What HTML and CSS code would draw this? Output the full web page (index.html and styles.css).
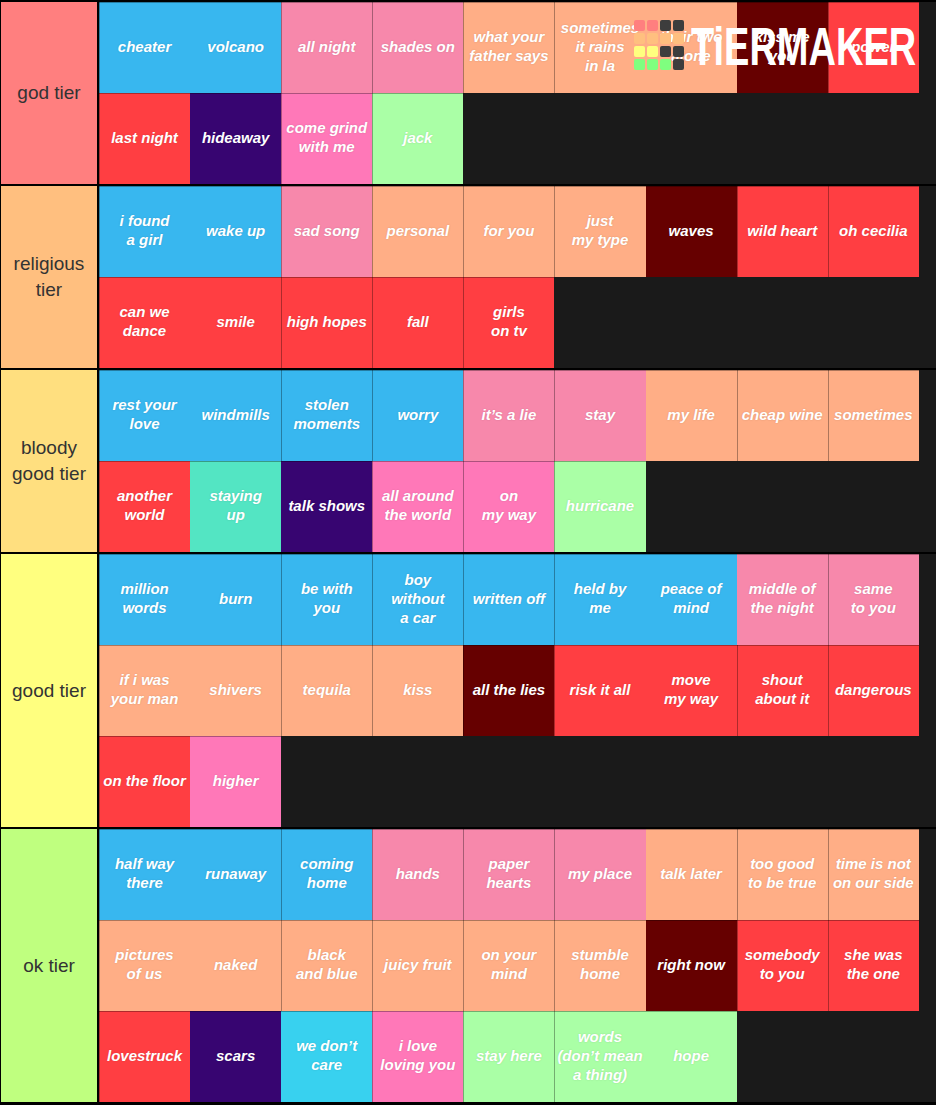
FILE: index.html
```html
<!DOCTYPE html>
<html>
<head>
<meta charset="utf-8">
<link rel="stylesheet" href="styles.css">
</head>
<body>
<div class="list">
  <div class="tier">
    <div class="label c1">god tier</div>
    <div class="items">
      <div class="tile bl">cheater</div>
      <div class="tile bl n">volcano</div>
      <div class="tile pk">all night</div>
      <div class="tile pk">shades on</div>
      <div class="tile pe">what your<br>father says</div>
      <div class="tile pe">sometimes<br>it rains<br>in la</div>
      <div class="tile pe n">their two<br>alone</div>
      <div class="tile dr n">kiss me<br>you</div>
      <div class="tile rd">power</div>
      <div class="tile rd">last night</div>
      <div class="tile pu n">hideaway</div>
      <div class="tile hp">come grind<br>with me</div>
      <div class="tile gr">jack</div>
    </div>
  </div>
  <div class="tier">
    <div class="label c2">religious tier</div>
    <div class="items">
      <div class="tile bl">i found<br>a girl</div>
      <div class="tile bl n">wake up</div>
      <div class="tile pk">sad song</div>
      <div class="tile pe">personal</div>
      <div class="tile pe">for you</div>
      <div class="tile pe">just<br>my type</div>
      <div class="tile dr n">waves</div>
      <div class="tile rd">wild heart</div>
      <div class="tile rd">oh cecilia</div>
      <div class="tile rd">can we<br>dance</div>
      <div class="tile rd n">smile</div>
      <div class="tile rd">high hopes</div>
      <div class="tile rd">fall</div>
      <div class="tile rd">girls<br>on tv</div>
    </div>
  </div>
  <div class="tier">
    <div class="label c3">bloody good tier</div>
    <div class="items">
      <div class="tile bl">rest your<br>love</div>
      <div class="tile bl n">windmills</div>
      <div class="tile bl">stolen<br>moments</div>
      <div class="tile bl">worry</div>
      <div class="tile pk">it’s a lie</div>
      <div class="tile pk">stay</div>
      <div class="tile pe n">my life</div>
      <div class="tile pe">cheap wine</div>
      <div class="tile pe">sometimes</div>
      <div class="tile rd">another<br>world</div>
      <div class="tile te n">staying<br>up</div>
      <div class="tile pu n">talk shows</div>
      <div class="tile hp">all around<br>the world</div>
      <div class="tile hp">on<br>my way</div>
      <div class="tile gr">hurricane</div>
    </div>
  </div>
  <div class="tier">
    <div class="label c4">good tier</div>
    <div class="items">
      <div class="tile bl">million<br>words</div>
      <div class="tile bl n">burn</div>
      <div class="tile bl">be with<br>you</div>
      <div class="tile bl">boy<br>without<br>a car</div>
      <div class="tile bl">written off</div>
      <div class="tile bl">held by<br>me</div>
      <div class="tile bl n">peace of<br>mind</div>
      <div class="tile pk n">middle of<br>the night</div>
      <div class="tile pk">same<br>to you</div>
      <div class="tile pe">if i was<br>your man</div>
      <div class="tile pe n">shivers</div>
      <div class="tile pe">tequila</div>
      <div class="tile pe">kiss</div>
      <div class="tile dr">all the lies</div>
      <div class="tile rd">risk it all</div>
      <div class="tile rd n">move<br>my way</div>
      <div class="tile rd">shout<br>about it</div>
      <div class="tile rd">dangerous</div>
      <div class="tile rd">on the floor</div>
      <div class="tile hp n">higher</div>
    </div>
  </div>
  <div class="tier">
    <div class="label c5">ok tier</div>
    <div class="items">
      <div class="tile bl">half way<br>there</div>
      <div class="tile bl n">runaway</div>
      <div class="tile bl">coming<br>home</div>
      <div class="tile pk">hands</div>
      <div class="tile pk">paper<br>hearts</div>
      <div class="tile pk">my place</div>
      <div class="tile pe n">talk later</div>
      <div class="tile pe">too good<br>to be true</div>
      <div class="tile pe">time is not<br>on our side</div>
      <div class="tile pe">pictures<br>of us</div>
      <div class="tile pe n">naked</div>
      <div class="tile pe">black<br>and blue</div>
      <div class="tile pe">juicy fruit</div>
      <div class="tile pe">on your<br>mind</div>
      <div class="tile pe">stumble<br>home</div>
      <div class="tile dr n">right now</div>
      <div class="tile rd">somebody<br>to you</div>
      <div class="tile rd">she was<br>the one</div>
      <div class="tile rd">lovestruck</div>
      <div class="tile pu n">scars</div>
      <div class="tile cy n">we don’t<br>care</div>
      <div class="tile hp">i love<br>loving you</div>
      <div class="tile gr">stay here</div>
      <div class="tile gr">words<br>(don’t mean<br>a thing)</div>
      <div class="tile gr n">hope</div>
    </div>
  </div>

  <div class="logo">
    <div class="squares">
      <span class="sq s1"></span><span class="sq s1"></span><span class="sq sx"></span><span class="sq sx"></span>
      <span class="sq s2"></span><span class="sq s2"></span><span class="sq s2"></span><span class="sq s2"></span>
      <span class="sq s3"></span><span class="sq s3"></span><span class="sq sx"></span><span class="sq sx"></span>
      <span class="sq s4"></span><span class="sq s4"></span><span class="sq s4"></span><span class="sq sx"></span>
    </div>
    <div class="logo-text">TiERMAKER</div>
  </div>
</div>
</body>
</html>
```

FILE: styles.css
```css
html, body {
  margin: 0;
  padding: 0;
  background: #000;
}

.list {
  position: relative;
  width: 936px;
  padding: 2px 0 2px 1px;
  box-sizing: border-box;
  background: #000;
  display: flex;
  flex-direction: column;
  gap: 2px;
  overflow: hidden;
}

.tier {
  display: flex;
  gap: 2px;
}

.label {
  width: 96px;
  flex: 0 0 96px;
  display: flex;
  align-items: center;
  justify-content: center;
  text-align: center;
  font-family: "Liberation Sans", Arial, sans-serif;
  font-size: 19px;
  line-height: 26px;
  color: #333;
  padding: 0 4px;
  box-sizing: border-box;
}

.c1 { background: #ff7f7f; }
.c2 { background: #ffbf7f; }
.c3 { background: #ffdf7f; }
.c4 { background: #ffff7f; }
.c5 { background: #bfff7f; }

.items {
  flex: 1;
  background: #1a1a1a;
  display: grid;
  grid-template-columns: repeat(9, 91.1px);
  grid-auto-rows: 91px;
  align-content: start;
}

.tile {
  display: flex;
  align-items: center;
  justify-content: center;
  text-align: center;
  font-family: "Liberation Sans", Arial, sans-serif;
  font-weight: bold;
  font-style: italic;
  font-size: 15px;
  line-height: 19px;
  color: #fff;
  text-shadow: 0 0 2px rgba(0, 0, 0, 0.15);
  box-shadow: inset 1px 0 0 rgba(0, 0, 0, 0.32), inset 0 1px 0 rgba(0, 0, 0, 0.32);
  overflow: hidden;
  white-space: nowrap;
  padding-bottom: 3px;
  box-sizing: border-box;
}

.tile.n {
  box-shadow: inset 0 1px 0 rgba(0, 0, 0, 0.32);
}

.bl { background: #38b7ef; }
.pk { background: #f788ab; }
.pe { background: #ffae86; }
.rd { background: #ff3e42; }
.dr { background: #660000; }
.pu { background: #370571; }
.hp { background: #ff78b8; }
.gr { background: #aaffa6; }
.te { background: #53e5c3; }
.cy { background: #38d1ef; }

.logo {
  position: absolute;
  top: 20px;
  left: 634px;
  display: flex;
  align-items: flex-start;
  gap: 7px;
}

.squares {
  display: grid;
  grid-template-columns: repeat(4, 11px);
  grid-auto-rows: 11px;
  gap: 2px;
}

.sq {
  border-radius: 2px;
}

.s1 { background: #ff7f7f; }
.s2 { background: #ffbf7f; }
.s3 { background: #ffff7f; }
.s4 { background: #7fff7f; }
.sx { background: #3d3d3d; }

.logo-text {
  font-family: "Liberation Sans", Arial, sans-serif;
  font-weight: bold;
  font-size: 38px;
  line-height: 38px;
  color: #fff;
  transform: scaleY(1.4);
  transform-origin: left top;
  white-space: nowrap;
}
```
